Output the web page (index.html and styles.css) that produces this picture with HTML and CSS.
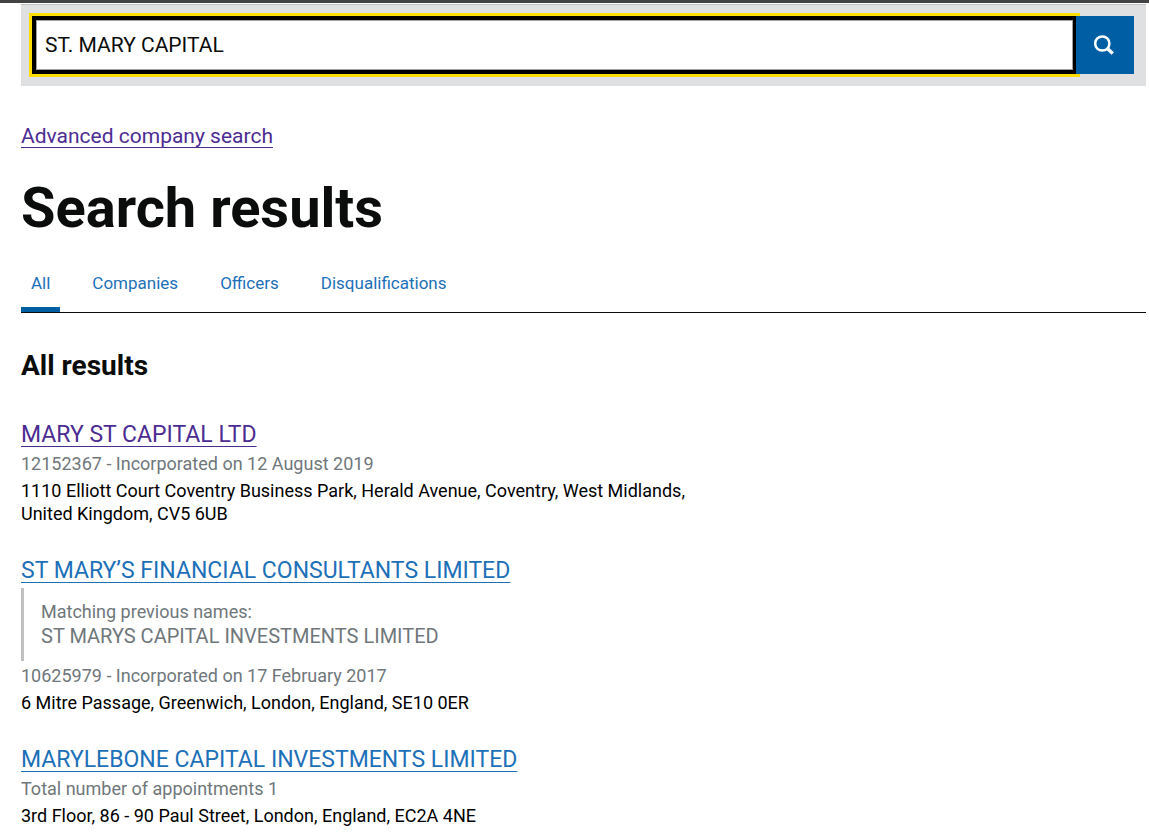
FILE: index.html
```html
<!DOCTYPE html>
<html lang="en">
	<head>
		<meta charset="UTF-8">
		<meta name="viewport" content="width=device-width,initial-scale=1">
		<title>Search results</title>
		<link rel="stylesheet" href="styles.css">
	</head>
	<body>
		<main class="content">
			<form class="search" action="#">
				<input class="search-input" type="search" name="q" value="ST. MARY CAPITAL" aria-label="Search companies and officers">
				<button class="search-btn" type="submit" aria-label="Search">
					<svg width="22" height="22" viewBox="0 0 22 22" fill="none" stroke="#fff">
						<circle cx="8.3" cy="9.5" r="7.1" stroke-width="2.5" />
						<path d="M13 14.2l5.8 5.2" stroke-width="3.4" />
					</svg>
				</button>
			</form>

			<p class="advanced"><a class="link visited" href="#">Advanced company search</a></p>

			<h1 class="page-title">Search results</h1>

			<nav class="tabs">
				<a class="tab active" href="#">All</a>
				<a class="tab" href="#">Companies</a>
				<a class="tab" href="#">Officers</a>
				<a class="tab" href="#">Disqualifications</a>
			</nav>

			<h2 class="section-title">All results</h2>

			<ul class="results">
				<li>
					<h3><a class="link visited" href="#">MARY ST CAPITAL LTD</a></h3>
					<p class="meta">12152367 - Incorporated on 12 August 2019</p>
					<p class="address">1110 Elliott Court Coventry Business Park, Herald Avenue, Coventry, West Midlands, United Kingdom, CV5 6UB</p>
				</li>
				<li>
					<h3><a class="link" href="#">ST MARY’S FINANCIAL CONSULTANTS LIMITED</a></h3>
					<div class="previous">
						<p>Matching previous names:</p>
						<p class="previous-name">ST MARYS CAPITAL INVESTMENTS LIMITED</p>
					</div>
					<p class="meta">10625979 - Incorporated on 17 February 2017</p>
					<p class="address">6 Mitre Passage, Greenwich, London, England, SE10 0ER</p>
				</li>
				<li>
					<h3><a class="link" href="#">MARYLEBONE CAPITAL INVESTMENTS LIMITED</a></h3>
					<p class="meta">Total number of appointments 1</p>
					<p class="address">3rd Floor, 86 - 90 Paul Street, London, England, EC2A 4NE</p>
				</li>
			</ul>
		</main>
	</body>
</html>
```
FILE: styles.css
```css
* {
	box-sizing: border-box;
	padding: 0;
	margin: 0;
}
body {
	border-top: 3px solid #434343;
	background: #fff;
	color: #0b0c0c;
	font-family: Roboto, "Liberation Sans", sans-serif;
	font-size: 18px;
	line-height: 24px;
}
.content {
	padding: 1px 3px 0 21px;
}

/* search bar */
.search {
	display: flex;
	padding: 11px 12px 12px 11px;
	border-top: 1px solid #bfc1c3;
	background: #dee0e2;
}
.search-input {
	flex: 1;
	min-width: 0;
	height: 58px;
	padding: 0 9px;
	border: 4px solid #000;
	outline: 3px solid #fd0;
	border-radius: 0;
	box-shadow: inset 0 0 0 1px #a0a0a0;
	background: #fff;
	color: #0b0c0c;
	font-family: inherit;
	font-size: 21px;
	-webkit-appearance: none;
	appearance: none;
}
.search-btn {
	position: relative;
	display: flex;
	align-items: center;
	justify-content: center;
	width: 58px;
	height: 58px;
	margin-left: -1px;
	border: 0;
	background: #005ea5;
	cursor: pointer;
}

.link {
	color: #1d70b8;
	text-decoration: underline;
	text-decoration-thickness: 1px;
	text-decoration-skip-ink: none;
	text-underline-offset: 4px;
}
.link.visited {
	color: #4c2c92;
}
.advanced {
	margin-top: 36px;
	font-size: 21px;
	line-height: 28px;
}
.page-title {
	margin-top: 28px;
	font-size: 56px;
	line-height: 60px;
}

/* tabs */
.tabs {
	display: flex;
	gap: 22px;
	margin-top: 33px;
	border-bottom: 1px solid #0b0c0c;
}
.tab {
	padding: 0 10px 12px;
	border-bottom: 5px solid transparent;
	color: #1d70b8;
	font-size: 17px;
	text-decoration: none;
}
.tab.active {
	border-bottom-color: #005ea5;
}
.section-title {
	margin-top: 37px;
	font-size: 28px;
	line-height: 32px;
}

/* results */
.results {
	max-width: 700px;
	margin-top: 38px;
	list-style: none;
}
.results li {
	margin-bottom: 31px;
}
.results h3 {
	font-size: 23px;
	font-weight: normal;
	line-height: 30px;
}
.meta {
	margin-top: 2px;
	color: #6f777b;
}
.address {
	margin-top: 3px;
	color: #000;
	line-height: 23px;
}
.previous {
	margin: 2px 0 3px;
	padding: 12px 17px 13px;
	border-left: 3px solid #bfc1c3;
	color: #6f777b;
}
.previous-name {
	font-size: 20px;
}
```
